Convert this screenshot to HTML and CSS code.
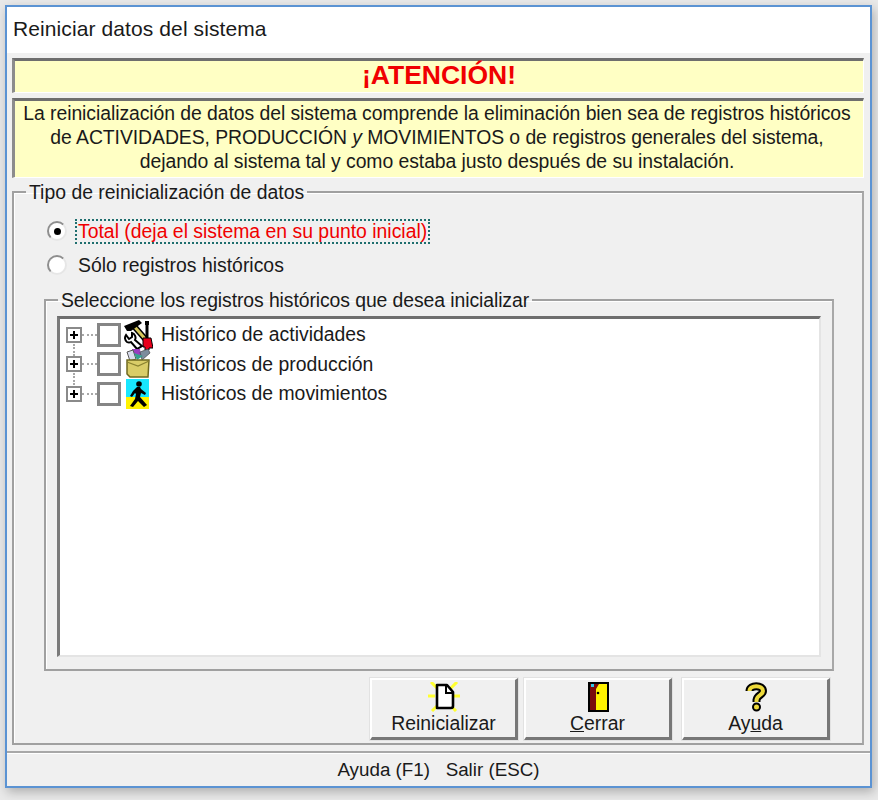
FILE: index.html
```html
<!DOCTYPE html>
<html lang="es">
<head>
<meta charset="utf-8">
<title>Reiniciar datos del sistema</title>
<link rel="stylesheet" href="styles.css">
</head>
<body>
<div class="window">
  <div class="titlebar">Reiniciar datos del sistema</div>
  <div class="content">
    <div class="banner heading">¡ATENCIÓN!</div>
    <div class="banner notice">
      La reinicialización de datos del sistema comprende la eliminación bien sea de registros históricos<br>
      de ACTIVIDADES, PRODUCCIÓN <i>y</i> MOVIMIENTOS o de registros generales del sistema,<br>
      dejando al sistema tal y como estaba justo después de su instalación.
    </div>
    <fieldset class="group outer">
      <legend>Tipo de reinicialización de datos</legend>
      <div class="radio-row first">
        <span class="radio checked"></span>
        <span class="radio-label focus">Total (deja el sistema en su punto inicial)</span>
      </div>
      <div class="radio-row">
        <span class="radio"></span>
        <span class="radio-label">Sólo registros históricos</span>
      </div>
      <fieldset class="group inner">
        <legend>Seleccione los registros históricos que desea inicializar</legend>
        <div class="tree">
          <div class="tree-row">
            <span class="expander"></span><span class="dots"></span><span class="check"></span>
            <svg class="tree-icon" viewBox="0 0 30 30" aria-hidden="true">
              <path d="M10 5 L24 21" stroke="#000" stroke-width="6"/>
              <path d="M10 5 L24 21" stroke="#d6c85a" stroke-width="3"/>
              <path d="M1 6 L16 0 L19 3 L8 11 L4 11 Z" fill="#000"/>
              <path d="M24 2 V19" stroke="#000" stroke-width="3"/>
              <path d="M22 1 H26 V5 H22 Z" fill="#000"/>
              <path d="M20 18 H28 L30 28 H26 V30 H22 V27 H20 Z" fill="#e8001a" stroke="#000"/>
              <path d="M3 15 a5 5 0 0 0 1 7 a4 4 0 0 0 4 0 L14 29 L19 26 L12 20 a5 5 0 0 0 -3 -7 L9 17 L6 19 Z" fill="#fff" stroke="#000" stroke-width="2"/>
            </svg>
            <span class="tree-label">Histórico de actividades</span>
          </div>
          <div class="tree-row">
            <span class="expander"></span><span class="dots"></span><span class="check"></span>
            <svg class="tree-icon" viewBox="0 0 30 30" aria-hidden="true">
              <path d="M9 0 L17 0 L18 6 L10 7 Z" fill="#9a3cc0"/>
              <path d="M4 3 L10 1 L13 10 L7 12 Z" fill="#d8dcec" stroke="#555"/>
              <path d="M17 3 L25 0 L27 4 L19 11 Z" fill="#7d8c9c" stroke="#444" stroke-width=".7"/>
              <path d="M11 4 L20 7 L14 11 Z" fill="#35a08e"/>
              <path d="M4 11 H26 L25 28 H7 L4 25 Z" fill="#d9cd68" stroke="#6e6820" stroke-width="1.5"/>
              <path d="M4 13 L15 17 L26 12" fill="none" stroke="#8a8230" stroke-width="1.2"/>
            </svg>
            <span class="tree-label">Históricos de producción</span>
          </div>
          <div class="tree-row">
            <span class="expander"></span><span class="dots"></span><span class="check"></span>
            <svg class="tree-icon" viewBox="0 0 30 30" aria-hidden="true">
              <rect x="3" y="0" width="23" height="18" fill="#18e6ff"/>
              <rect x="3" y="18" width="23" height="12" fill="#fff200"/>
              <circle cx="16" cy="5" r="2.8" fill="#000"/>
              <path d="M14 8 L10 12 L7 17 L9 18 L12 14 L13 15 L12 20 L7 27 L10 28 L15 22 L21 28 L24 26 L17 18 L18 14 L22 16 L23 14 L18 10 L17 8 Z" fill="#000"/>
            </svg>
            <span class="tree-label">Históricos de movimientos</span>
          </div>
        </div>
      </fieldset>
      <div class="actions">
        <button class="btn" type="button">
          <svg class="btn-icon" viewBox="0 0 32 30" aria-hidden="true">
            <path d="M3 0 L10 7 M29 0 L22 7 M0 14 H7 M25 14 H32 M4 29 L10 23 M28 29 L22 23" stroke="#ffff30" stroke-width="3"/>
            <path d="M9 3 H19 L25 10 V24 Q25 26 23 26 H9 Z" fill="#fff" stroke="#000" stroke-width="2.6" stroke-linejoin="round"/>
            <path d="M18 3 V11 H25" fill="none" stroke="#000" stroke-width="2"/>
          </svg>
          <span>Reinicializar</span>
        </button>
        <button class="btn" type="button">
          <svg class="btn-icon" viewBox="0 0 32 30" aria-hidden="true">
            <rect x="7" y="1" width="19" height="28" fill="#fff200" stroke="#000" stroke-width="2"/>
            <path d="M8 2 H17 L14 7 V28 H8 Z" fill="#7a0c0c"/>
            <rect x="9" y="2" width="3" height="3" fill="#30c8e8"/>
            <circle cx="16" cy="11" r="1.3" fill="#000"/>
          </svg>
          <span><u>C</u>errar</span>
        </button>
        <button class="btn" type="button">
          <svg class="btn-icon" viewBox="0 0 32 30" aria-hidden="true">
            <path d="M9.5 9 C9.5 2.5 23 2.5 23 9 C23 13 17 13 16.5 18 V20" fill="none" stroke="#000" stroke-width="8"/>
            <circle cx="16.5" cy="25" r="3.5" fill="#ecd93a" stroke="#000" stroke-width="2"/>
            <path d="M9.5 9 C9.5 2.5 23 2.5 23 9 C23 13 17 13 16.5 18 V20" fill="none" stroke="#ecd93a" stroke-width="4"/>
          </svg>
          <span>Ay<u>u</u>da</span>
        </button>
      </div>
    </fieldset>
  </div>
  <div class="statusbar">Ayuda (F1)&nbsp;&nbsp; Salir (ESC)</div>
</div>
</body>
</html>
```
FILE: styles.css
```css
* { box-sizing: border-box; }
html, body { margin: 0; height: 100%; }
body {
  background: #e9e9e9;
  font-family: "Liberation Sans", Arial, sans-serif;
  font-size: 19.4px;
  color: #1a1a1a;
  padding: 5px 5px 0;
  overflow: hidden;
}
.window {
  width: 867px;
  height: 783px;
  border: 2px solid #5b93d3;
  background: #f0f0f0;
  display: flex;
  flex-direction: column;
  box-shadow: 2px 4px 10px rgba(0,0,0,.25);
}
.titlebar {
  height: 46px;
  background: #fff;
  padding: 10px 0 0 6px;
  font-size: 21px;
  letter-spacing: .1px;
  line-height: 24px;
  flex: none;
}
.content {
  flex: 1;
  padding: 5px 6px 0 5px;
  display: flex;
  flex-direction: column;
  min-height: 0;
}
.banner {
  background: #ffffc4;
  border-top: 3px solid #6e6e6e;
  border-left: 3px solid #8c8c8c;
  border-right: 1px solid #fff;
  border-bottom: 1px solid #fff;
  text-align: center;
  flex: none;
}
.heading {
  height: 35px;
  color: #f00000;
  font-weight: bold;
  font-size: 26.5px;
  line-height: 29px;
  margin-bottom: 5px;
}
.notice {
  height: 80px;
  padding-right: 4px;
  letter-spacing: -.07px;
  line-height: 24px;
  white-space: nowrap;
}
.notice i { font-style: italic; }
.group {
  margin: 0;
  min-width: 0;
  padding: 0;
  border: 2px solid #a0a0a0;
  border-right-color: #a8a8a8;
  box-shadow: inset 1px 1px 0 #fff;
}
.group legend {
  padding: 0 3px;
  margin-left: 12px;
  line-height: 22px;
}
.outer {
  margin-top: 3px;
  height: 569px;
  display: flex;
  flex-direction: column;
}
.radio-row {
  display: flex;
  align-items: center;
  height: 34px;
  gap: 9px;
  margin-left: 33px;
}
.radio-row.first { margin-top: 11px; }
.radio {
  width: 20px;
  height: 20px;
  border-radius: 50%;
  background: #fff;
  border: 2px solid #8e8e8e;
  border-right-color: #e6e6e6;
  border-bottom-color: #e6e6e6;
  flex: none;
  display: flex;
  align-items: center;
  justify-content: center;
}
.radio.checked::after {
  content: "";
  width: 7px;
  height: 7px;
  border-radius: 50%;
  background: #000;
}
.radio-label { padding: 0 2px; line-height: 23px; }
.focus {
  color: #f00000;
  outline: 2px dotted #1e6e6e;
  outline-offset: -1px;
}
.inner {
  width: 790px;
  height: 382px;
  margin: 7px 0 0 30px;
  padding: 5px 11px 0;
  flex: none;
}
.group.inner > legend {
  margin-left: 1px;
  letter-spacing: -.09px;
}
.tree {
  height: 341px;
  background: #fff;
  border-top: 3px solid #6e6e6e;
  border-left: 3px solid #7a7a7a;
  border-right: 2px solid #e4e4e4;
  border-bottom: 2px solid #e4e4e4;
  padding: 1px 0 0 6px;
}
.tree-row {
  position: relative;
  display: flex;
  align-items: center;
  height: 29.5px;
}
.tree-row + .tree-row::before {
  content: "";
  position: absolute;
  left: 7px;
  top: -6px;
  height: 12px;
  border-left: 2px dotted #a8a8a8;
}
.expander {
  position: relative;
  width: 16px;
  height: 16px;
  border: 2px solid #8a8a8a;
  background: #fff;
  flex: none;
}
.expander::before, .expander::after {
  content: "";
  position: absolute;
  background: #000;
}
.expander::before { left: 2px; right: 2px; top: 5px; height: 2px; }
.expander::after { top: 2px; bottom: 2px; left: 5px; width: 2px; }
.dots {
  width: 15px;
  border-top: 2px dotted #a8a8a8;
  flex: none;
}
.check {
  width: 24px;
  height: 24px;
  border: 3px solid #858585;
  background: #fff;
  flex: none;
}
.tree-icon {
  width: 30px;
  height: 30px;
  margin-left: 2px;
  flex: none;
}
.tree-label { margin-left: 8px; }
.actions {
  display: flex;
  margin: 7px 0 0 356px;
}
.btn {
  width: 148px;
  height: 62px;
  margin-right: 6px;
  padding: 0;
  background: #f0f0f0;
  border-top: 2px solid #fff;
  border-left: 2px solid #fff;
  border-right: 3px solid #777;
  border-bottom: 3px solid #777;
  font: inherit;
  color: #1a1a1a;
  display: flex;
  flex-direction: column;
  align-items: center;
  line-height: 22px;
  box-shadow: 0 0 0 1px #e2e2e2;
}
.btn:last-child { margin-left: 4px; margin-right: 0; }
.btn-icon { width: 32px; height: 30px; margin-top: 2px; flex: none; }
.statusbar {
  height: 35px;
  flex: none;
  margin-top: 6px;
  border-top: 2px solid #a8a8a8;
  box-shadow: inset 0 1px 0 #fff;
  text-align: center;
  line-height: 33px;
  font-size: 18.8px;
  white-space: pre;
}
```
